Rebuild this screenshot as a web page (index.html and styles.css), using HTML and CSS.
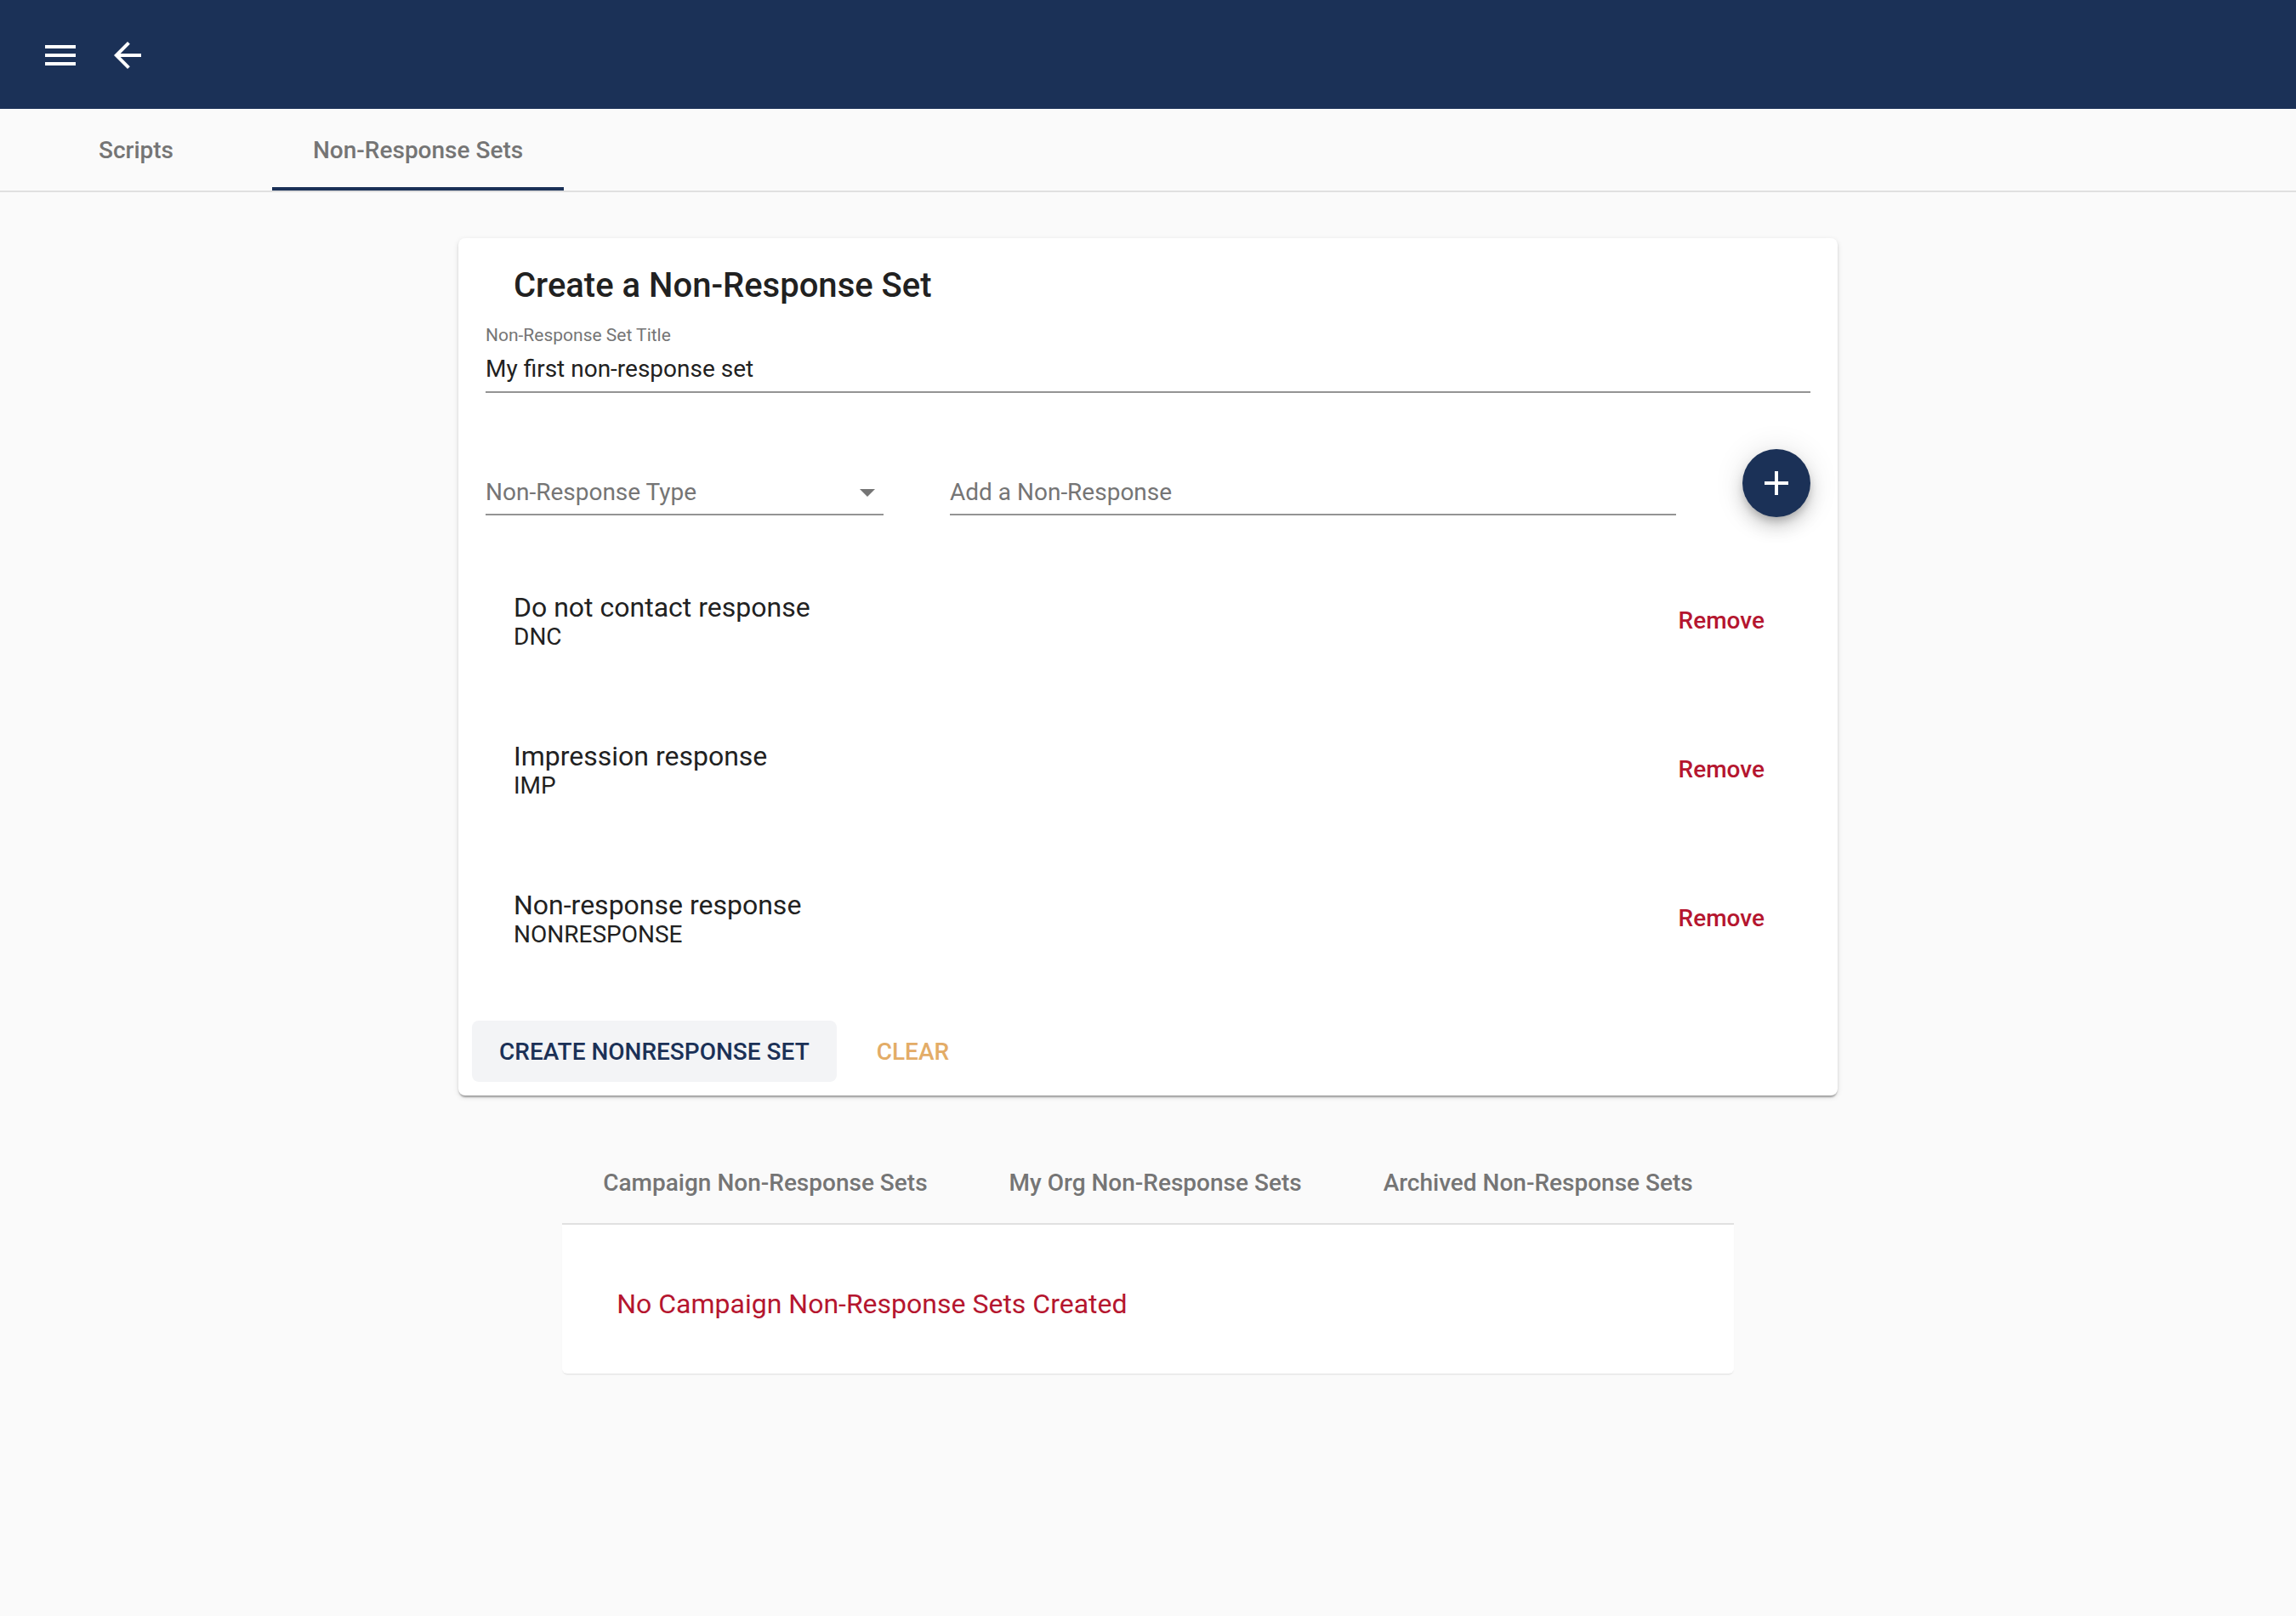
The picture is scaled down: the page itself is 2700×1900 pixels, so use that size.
FILE: index.html
```html
<!DOCTYPE html>
<html lang="en">
<head>
<meta charset="utf-8">
<title>Non-Response Sets</title>
<link rel="stylesheet" href="styles.css">
</head>
<body>
<header class="appbar">
  <svg class="appbar-icon" viewBox="0 0 24 24"><path d="M3 18h18v-2H3v2zm0-5h18v-2H3v2zm0-7v2h18V6H3z"/></svg>
  <svg class="appbar-icon" viewBox="0 0 24 24"><path d="M20 11H7.83l5.59-5.59L12 4l-8 8 8 8 1.41-1.41L7.83 13H20v-2z"/></svg>
</header>

<nav class="main-tabs">
  <div class="main-tab">Scripts</div>
  <div class="main-tab active">Non-Response Sets</div>
</nav>

<main class="content">
  <section class="card">
    <h2 class="card-title">Create a Non-Response Set</h2>
    <div class="field">
      <div class="field-label">Non-Response Set Title</div>
      <div class="field-value">My first non-response set</div>
    </div>

    <div class="add-row">
      <div class="select">
        <span>Non-Response Type</span>
        <span class="caret"></span>
      </div>
      <div class="text-input">Add a Non-Response</div>
      <div class="fab">
        <svg viewBox="0 0 24 24"><path d="M19 13h-6v6h-2v-6H5v-2h6V5h2v6h6v2z"/></svg>
      </div>
    </div>

    <ul class="response-list">
      <li class="response-item">
        <div class="response-text">
          <div class="primary">Do not contact response</div>
          <div class="secondary">DNC</div>
        </div>
        <span class="remove">Remove</span>
      </li>
      <li class="response-item">
        <div class="response-text">
          <div class="primary">Impression response</div>
          <div class="secondary">IMP</div>
        </div>
        <span class="remove">Remove</span>
      </li>
      <li class="response-item">
        <div class="response-text">
          <div class="primary">Non-response response</div>
          <div class="secondary">NONRESPONSE</div>
        </div>
        <span class="remove">Remove</span>
      </li>
    </ul>

    <div class="actions">
      <button class="btn btn-create">Create Nonresponse Set</button>
      <button class="btn btn-clear">Clear</button>
    </div>
  </section>

  <section class="sets">
    <div class="sets-tabs">
      <div class="sets-tab">Campaign Non-Response Sets</div>
      <div class="sets-tab">My Org Non-Response Sets</div>
      <div class="sets-tab">Archived Non-Response Sets</div>
    </div>
    <div class="sets-panel">No Campaign Non-Response Sets Created</div>
  </section>
</main>
</body>
</html>
```

FILE: styles.css
```css
* { box-sizing: border-box; }

body {
  margin: 0;
  background: #fafafa;
  font-family: Roboto, "Liberation Sans", sans-serif;
  color: #212121;
}

.appbar {
  height: 128px;
  background: #1b3157;
  display: flex;
  align-items: center;
  padding-left: 47px;
  padding-top: 2px;
  gap: 31px;
}

.appbar-icon {
  width: 48px;
  height: 48px;
  fill: #ffffff;
  display: block;
}

.main-tabs {
  display: flex;
  height: 98px;
  border-bottom: 2px solid #e0e0e0;
}

.main-tab {
  min-width: 320px;
  padding: 0 48px;
  display: flex;
  align-items: center;
  justify-content: center;
  font-size: 28px;
  font-weight: 500;
  color: #757575;
}

.main-tab.active {
  box-shadow: inset 0 -4px 0 #1b3157;
}

.content {
  padding-top: 54px;
  padding-bottom: 80px;
}

.card {
  width: 1622px;
  margin: 0 auto;
  background: #ffffff;
  border-radius: 8px;
  padding-top: 32px;
  box-shadow: 0 4px 2px -2px rgba(0,0,0,0.2), 0 2px 2px 0 rgba(0,0,0,0.14), 0 2px 6px 0 rgba(0,0,0,0.12);
}

.card-title {
  margin: 0 32px 0 65px;
  font-size: 40px;
  line-height: 48px;
  font-weight: 500;
  color: #212121;
}

.field {
  margin: 24px 32px 0;
}

.field-label {
  font-size: 21px;
  line-height: 21px;
  color: #757575;
}

.field-value {
  margin-top: 12px;
  font-size: 28px;
  line-height: 34px;
  padding-bottom: 9px;
  border-bottom: 2px solid #949494;
}

.add-row {
  display: flex;
  align-items: flex-start;
  gap: 78px;
  padding: 0 32px;
}

.select,
.text-input {
  margin-top: 100px;
  font-size: 28px;
  line-height: 34px;
  color: #757575;
  padding-bottom: 8px;
  border-bottom: 2px solid #949494;
}

.select {
  width: 468px;
  display: flex;
  align-items: center;
  justify-content: space-between;
  padding-right: 10px;
}

.caret {
  width: 0;
  height: 0;
  border-left: 9px solid transparent;
  border-right: 9px solid transparent;
  border-top: 9px solid #757575;
}

.text-input {
  flex: 1;
}

.fab {
  width: 80px;
  height: 80px;
  margin-top: 66px;
  border-radius: 50%;
  background: #1b3157;
  display: flex;
  align-items: center;
  justify-content: center;
  box-shadow: 0 6px 10px -2px rgba(0,0,0,0.2), 0 12px 20px 0 rgba(0,0,0,0.14), 0 2px 36px 0 rgba(0,0,0,0.12);
}

.fab svg {
  width: 48px;
  height: 48px;
  fill: #ffffff;
  display: block;
}

.response-list {
  list-style: none;
  margin: 34px 0 0;
  padding: 0;
}

.response-item {
  height: 175px;
  display: flex;
  align-items: center;
  justify-content: space-between;
  padding: 0 86px 0 65px;
}

.primary {
  font-size: 32px;
  line-height: 38px;
  color: #212121;
}

.secondary {
  font-size: 28px;
  line-height: 32px;
  color: #212121;
}

.remove {
  font-size: 28px;
  line-height: 34px;
  font-weight: 500;
  color: #b5162f;
}

.actions {
  margin-top: 17px;
  padding: 16px;
  display: flex;
  align-items: center;
}

.btn {
  height: 72px;
  border: none;
  border-radius: 8px;
  font-family: Roboto, "Liberation Sans", sans-serif;
  font-size: 28px;
  font-weight: 500;
  text-transform: uppercase;
  cursor: pointer;
}

.btn-create {
  padding: 0 32px;
  background: #f3f4f6;
  color: #1b3157;
}

.btn-clear {
  margin-left: 31px;
  padding: 0 16px;
  background: transparent;
  color: #e3ac67;
}

.sets {
  width: fit-content;
  margin: 54px auto 0;
}

.sets-tabs {
  display: flex;
  height: 98px;
  border-bottom: 2px solid #e0e0e0;
}

.sets-tab {
  padding: 0 48px;
  display: flex;
  align-items: center;
  font-size: 28px;
  font-weight: 500;
  color: #757575;
}

.sets-panel {
  background: #ffffff;
  padding: 74px 64px 63px;
  border-radius: 0 0 6px 6px;
  font-size: 32px;
  line-height: 38px;
  color: #b5162f;
  box-shadow: 0 2px 2px -1px rgba(0,0,0,0.12);
}
```
